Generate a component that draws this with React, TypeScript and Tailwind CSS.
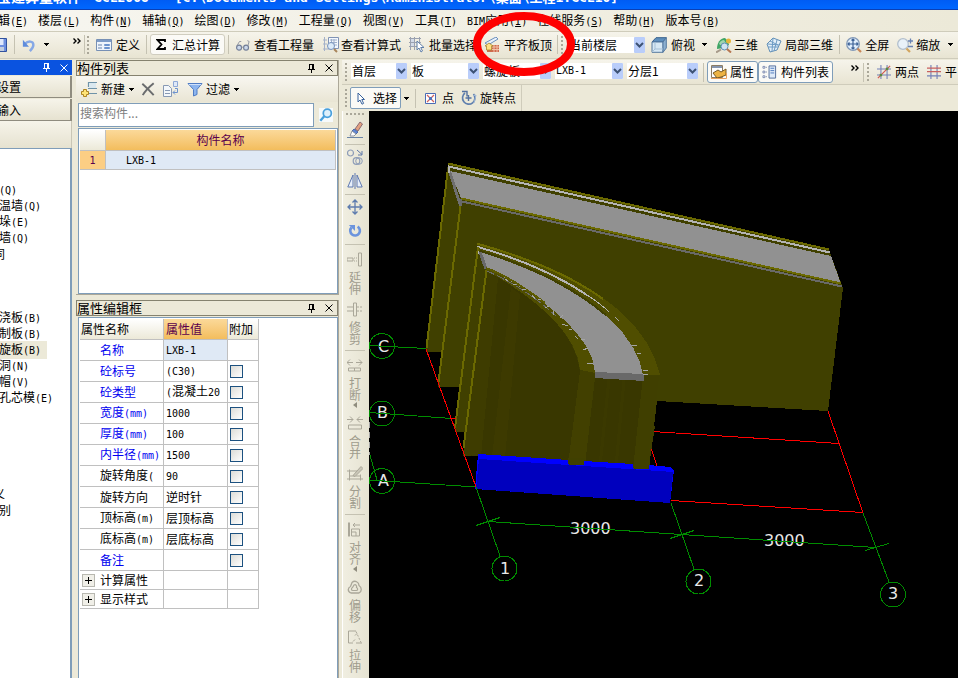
import React from "react";

/* Latin runs are set in a half-width face so that they take half a Chinese character each. */
function Mix({ children }: { children: string }) {
  return (
    <>
      {children.split(/([\x20-\x7e]+)/).map((part, i) =>
        i % 2 ? (
          <span key={i} className="font-['DejaVu_Sans_Mono','Noto_Sans_CJK_SC',monospace] text-[10px] whitespace-pre">
            {part}
          </span>
        ) : (
          part
        )
      )}
    </>
  );
}

function Icon({ children, className = "w-4 h-4", box = "0 0 16 16" }: { children: React.ReactNode; className?: string; box?: string }) {
  return (
    <svg viewBox={box} className={"shrink-0 " + className} fill="none" aria-hidden="true">
      {children}
    </svg>
  );
}

const Caret = ({ className = "" }: { className?: string }) => (
  <svg viewBox="0 0 6 3" className={"h-[3px] w-[6px] shrink-0 " + className} shapeRendering="crispEdges" aria-hidden="true">
    <path d="M0 0h6L3 3z" fill="#000" />
  </svg>
);
const Sep = ({ className = "" }: { className?: string }) => <span className={"h-[19px] w-px shrink-0 bg-[#c5c2b2] " + className} />;
const Grip = ({ className = "" }: { className?: string }) => (
  <span className={"flex shrink-0 flex-col gap-[2px] " + className}>
    {[0, 1, 2, 3, 4].map((i) => (
      <i key={i} className="block h-[2px] w-[2px] bg-[#aaa799]" />
    ))}
  </span>
);
const More = ({ className = "" }: { className?: string }) => (
  <button aria-label="更多" className={"shrink-0 " + className}>
    <Icon box="0 0 8 6" className="h-[6px] w-2">
      <path d="M0.5 0.5L3 3L0.5 5.5M4.5 0.5L7 3L4.5 5.5" stroke="#000" strokeWidth="1.4" />
    </Icon>
  </button>
);

function Tool({ icon, text, className = "" }: { icon: React.ReactNode; text: string; className?: string }) {
  return (
    <button className={"flex shrink-0 items-center whitespace-nowrap " + className}>
      {icon}
      <span>{text}</span>
    </button>
  );
}

function Combo({ value, label, className = "" }: { value: string; label: string; className?: string }) {
  return (
    <label className={"relative flex h-4 shrink-0 items-center bg-white " + className}>
      <span className="sr-only">{label}</span>
      <select defaultValue={value} className="h-4 w-full appearance-none bg-transparent pl-px leading-4 outline-none">
        <option>{value}</option>
      </select>
      <span className="pointer-events-none absolute top-0 right-0 flex h-4 w-[11px] items-center justify-center rounded-[1px] bg-[#b9cdfa]">
        <svg viewBox="0 0 9 6" className="h-[6px] w-[9px]" aria-hidden="true">
          <path d="M1 1L4.5 4.5L8 1" fill="none" stroke="#3d5274" strokeWidth="2" />
        </svg>
      </span>
    </label>
  );
}

/* ---------- icons ---------- */
const SaveIcon = (
  <Icon box="8 0 8 16" className="h-4 w-2">
    <path d="M1 1.500h13.500v13H1z" fill="#6d8fe0" stroke="#31529e" />
    <path d="M4 2h7.500v6H4z" fill="#dfe8fb" />
    <path d="M4 10h8v4H4z" fill="#c3cede" />
  </Icon>
);
const UndoIcon = (
  <Icon className="h-[14px] w-[14px]">
    <path d="M3 7C7 3 13 3 13 8c0 3-2 5-4 7" stroke="#86a8e6" strokeWidth="2.800" />
    <path d="M1 2v8h7z" fill="#5f8cdc" />
  </Icon>
);
const DefineIcon = (
  <Icon>
    <path d="M.5 2.500h15v11H.5z" fill="#eef4fc" stroke="#7790b5" />
    <path d="M1 3h14v2H1z" fill="#7e9cc8" />
    <path d="M2 8h4M2 11h4" stroke="#6681aa" />
    <path d="M8.500 7.500h5v1h-5zM8.500 10.500h5v1h-5z" stroke="#6c93cd" />
  </Icon>
);
const GlassesIcon = (
  <Icon className="h-4 w-[14px]">
    <circle cx="3.500" cy="11" r="2.800" fill="#cbd8ea" stroke="#707c96" strokeWidth="1.300" />
    <circle cx="11.500" cy="11" r="2.800" fill="#cbd8ea" stroke="#707c96" strokeWidth="1.300" />
    <path d="M6.300 10.500h2.400M1 9L4 4h2M13.500 9L15 4l-2-1" stroke="#8a8f9d" />
  </Icon>
);
const FormulaIcon = (
  <Icon>
    <path d="M5.500.5h10v11h-10z" fill="#f4f8fd" stroke="#8093b5" />
    <path d="M7 3h7M7 5.500h7M7 8h7M8.500 2v7M11 2v7" stroke="#9fb0cc" />
    <path d="M1.500 0v14M0 3h4M0 7h4M0 12h7" stroke="#a5b2c9" />
    <circle cx="8" cy="9" r="3.500" fill="#dcebf9" stroke="#7893bd" />
    <path d="M11 12l3 3" stroke="#a8855c" strokeWidth="2" />
  </Icon>
);
const BatchIcon = (
  <Icon>
    <path d="M0 1.500h12M0 5.500h12M0 9.500h8M1.500 0v13M5.500 0v13M10.500 0v6" stroke="#9aa1b0" />
    <path d="M2 2h3v3H2zM2 6h3v3H2z" fill="#d3dbe9" />
    <path d="M8 4v9l2-2 2 4 1.500-1-1.800-3.500H15z" fill="#fff" stroke="#5f7ea9" />
  </Icon>
);
const FlushIcon = (
  <Icon>
    <path d="M1 6L12 0l2 2L4 8z" fill="#e9f1fb" stroke="#6a8fbd" />
    <path d="M8 8h7v7H3v-3h5z" fill="#cf6a4e" />
    <path d="M8 10h7M8 12.500h7M10 8v7M13 8v7" stroke="#f1c1a7" />
    <path d="M1 9l4-3 4 3H7.500v4h-5V9z" fill="#ffe083" stroke="#a8872c" strokeWidth=".8" />
  </Icon>
);
const CubeIcon = (
  <Icon>
    <path d="M1 5l4-4.300h10.300L12 5z" fill="#5e8fbd" stroke="#365f8d" />
    <path d="M1 5h11v10.300H1z" fill="#d6e8f4" stroke="#54789e" />
    <path d="M12 5l3.300-4.300V11L12 15.300z" fill="#8cb0d0" stroke="#54789e" />
    <path d="M4 5v7h8M1 15l3-3" stroke="#a4bfd6" />
  </Icon>
);
const ThreeDIcon = (
  <Icon>
    <path d="M1 12C1 6 4 1 9 1l3 3 1 4-6 3z" fill="#3fa565" />
    <path d="M3 7c1-3 3-4 5-4l2 3-4 3z" fill="#9fd4ae" />
    <circle cx="12.500" cy="4" r="2.500" fill="#e6b53c" />
    <circle cx="8.500" cy="9.500" r="3.500" fill="#cfe3f2" stroke="#5d8fb6" />
    <path d="M11 12l4 3.500" stroke="#b67650" strokeWidth="2" />
    <path d="M0 15.500l5-3" stroke="#a79a8a" strokeWidth="2" />
  </Icon>
);
const LocalIcon = (
  <Icon>
    <path d="M1 7l6-6 8 3-4 9-7 2z" fill="#e3eff8" stroke="#628fb6" />
    <path d="M4 4l8 4M2 10h10M7 1L6 14M11 3L8 14M2 7l11 1" stroke="#6d9bc4" />
  </Icon>
);
const FullIcon = (
  <Icon>
    <circle cx="7" cy="7" r="6.300" fill="#e1eefb" stroke="#8399b7" strokeWidth="1.300" />
    <path d="M7 2v10M2 7h10M5.500 3.500L7 2l1.500 1.500M5.500 10.500L7 12l1.500-1.500M3.500 5.500L2 7l1.500 1.500M10.500 5.500L12 7l-1.500 1.500" stroke="#3e6297" strokeWidth="1.200" />
    <path d="M11.500 11.500l3.500 3.500" stroke="#c98859" strokeWidth="2.200" />
  </Icon>
);
const ZoomIcon = (
  <Icon>
    <circle cx="6" cy="7" r="5.300" fill="#e9f1f9" stroke="#b2bfcd" strokeWidth="1.300" />
    <path d="M9.500 11.500L13 15" stroke="#d2a55e" strokeWidth="2.200" />
    <path d="M11 4h5M13.500 1.500v5M11 9.500h5" stroke="#6982b4" strokeWidth="1.300" />
  </Icon>
);
const PropIcon = (
  <Icon>
    <path d="M.5 1.500h11v12H.5z" fill="#fff" stroke="#8b7c64" />
    <path d="M1 2h10v2H1z" fill="#8695ae" />
    <path d="M2 9l5-3 3 2 5-3v6l-5 2-4 1z" fill="#edb343" stroke="#795b23" />
    <path d="M0 14.500h15.500V9" stroke="#e9a15d" />
  </Icon>
);
const ListIcon = (
  <Icon className="h-4 w-[15px]">
    <path d="M7.500 1.500h7v13h-7z" fill="#dfeaf8" stroke="#516c9b" />
    <path d="M9 4h4M9 6.500h4M9 9h4" stroke="#4d79bd" />
    <path d="M1 2h2v2H1zM1 7h2v2H1zM1 12h2v2H1z" fill="#fff" stroke="#6173a2" strokeWidth=".8" />
    <path d="M4 3h2M4 8h2M4 13h2" stroke="#54648e" strokeDasharray="1 1" />
  </Icon>
);
const TwoPointIcon = (
  <Icon className="h-[14px] w-[14px]">
    <path d="M0 4.500h16M0 11.500h16M4.500 0v16M11.500 0v16" stroke="#7380b7" strokeWidth="1.200" />
    <path d="M1 15L15 1" stroke="#d05a52" strokeWidth="1.400" />
    <circle cx="4.500" cy="11.500" r="1.600" fill="#5b8a3c" />
    <circle cx="11.500" cy="4.500" r="1.600" fill="#5b8a3c" />
  </Icon>
);
const ParallelIcon = (
  <Icon className="h-[14px] w-[14px]">
    <path d="M4.500 0v16M11.500 0v16M0 12.500h16" stroke="#7380b7" strokeWidth="1.300" />
    <path d="M0 3.500h16M0 7.500h16" stroke="#c8605f" strokeWidth="1.300" />
  </Icon>
);
const PointerIcon = (
  <Icon className="h-[13px] w-2" box="0 0 8 13">
    <path d="M1 1v9l2-2 2 4.200 1.600-.8L4.800 7.500h2.700z" fill="#fff" stroke="#38629c" />
  </Icon>
);
const PointIcon = (
  <Icon className="h-[11px] w-[11px]" box="0 0 11 11">
    <path d="M.5.5h10v10H.5z" fill="#fff" stroke="#4a6cb5" />
    <path d="M2 2l7 7M9 2L2 9" stroke="#d0605c" strokeWidth="1.200" />
    <path d="M4 4h3v3H4z" fill="#5173b8" />
  </Icon>
);
const RotPointIcon = (
  <Icon>
    <path d="M4 3a6.200 6.200 0 1 0 8.500 1" stroke="#5f7fae" strokeWidth="1.700" />
    <path d="M1 1.500h5v5M7.500 5v6M4.500 8h6" stroke="#5371a0" strokeWidth="1.400" />
    <path d="M12 6l3-1-2 8" stroke="#9db6d6" />
  </Icon>
);
const NewIcon = (
  <Icon>
    <path d="M7 1.500h9M7 7.500h9M8 12.500h8M7.500 1v5" stroke="#6f93a8" strokeWidth="1.200" />
    <path d="M8 2h7v5H8z" fill="#dae8ef" />
    <path d="M2.500 8.500h3v2h2v3h-2v2h-3v-2h-2v-3h2z" fill="#ffe477" stroke="#ad8523" />
  </Icon>
);
const DeleteIcon = (
  <Icon className="h-[14px] w-[14px]">
    <path d="M1.500 2C6 6 10 10 14.500 15M14.500 1.500C9 6 5 10 2 15" stroke="#6a6c6e" strokeWidth="2.200" />
  </Icon>
);
const CopyDocIcon = (
  <Icon>
    <path d="M.5 4.500h5l3 3v8h-8z" fill="#f3f7fb" stroke="#8799b4" />
    <path d="M2 9.500h5M2 12.500h5" stroke="#8799b4" />
    <path d="M12 7.500h2.500v4H10M12 9.500l-2 2 2 2" stroke="#6d93ce" />
    <path d="M10.500.5h4v5h-4z" fill="#dfe9f8" stroke="#8fa9d6" />
  </Icon>
);
const FunnelIcon = (
  <Icon>
    <path d="M1 2.500h14L10 8.500v5L6.500 15V8.500z" fill="#8db5ee" stroke="#4f7cc4" />
    <path d="M2 3.500h12" stroke="#cfe1fa" />
  </Icon>
);
const PinIcon = ({ color }: { color: string }) => (
  <Icon box="0 0 7 9" className="h-[9px] w-[7px]">
    <path d="M1.500 5V.5h4V5M0 5.500h7M3.500 5.500V9M4.600 1v4" stroke={color} strokeWidth="1.100" shapeRendering="crispEdges" />
  </Icon>
);
const CloseIcon = ({ color }: { color: string }) => (
  <Icon box="0 0 8 8" className="h-2 w-2">
    <path d="M.5.5l7 7M7.500.5l-7 7" stroke={color} />
  </Icon>
);

/* ---------- data ---------- */
const menus: [string, string][] = [
  ["辑", "E"], ["楼层", "L"], ["构件", "N"], ["辅轴", "Q"], ["绘图", "D"], ["修改", "M"], ["工程量", "Q"],
  ["视图", "V"], ["工具", "T"], ["BIM应用", "I"], ["在线服务", "S"], ["帮助", "H"], ["版本号", "B"],
];

const tree: (string | null)[] = [
  "(Q)", "温墙(Q)", "垛(E)", "墙(Q)", "同", null, null, null, "浇板(B)", "制板(B)", "旋板(B)", "洞(N)", "帽(V)",
  "孔芯模(E)", null, null, null, null, null, "义", "别",
];

const props: [string, string, boolean, boolean][] = [
  ["名称", "LXB-1", true, false],
  ["砼标号", "(C30)", true, true],
  ["砼类型", "(混凝土20", true, true],
  ["宽度(mm)", "1000", true, true],
  ["厚度(mm)", "100", true, true],
  ["内半径(mm)", "1500", true, true],
  ["旋转角度(", "90", false, true],
  ["旋转方向", "逆时针", false, true],
  ["顶标高(m)", "层顶标高", false, true],
  ["底标高(m)", "层底标高", false, true],
  ["备注", "", true, true],
];

/* ---------- side panels ---------- */
function PanelTitle({ text }: { text: string }) {
  return (
    <header className="flex h-4 shrink-0 items-center border border-[#85826f] bg-[#ece9d8] pr-1 text-[13px]">
      <h2 className="grow leading-[14px]">{text}</h2>
      <button aria-label="固定" className="mr-[10px]"><PinIcon color="#000" /></button>
      <button aria-label="关闭"><CloseIcon color="#000" /></button>
    </header>
  );
}

function ModulePanel() {
  return (
    <aside className="flex w-[72px] shrink-0 flex-col overflow-hidden">
      <header className="flex h-[15px] shrink-0 items-center justify-end bg-[#0a53e0] pr-1">
        <button aria-label="固定" className="mr-[10px]"><PinIcon color="#fff" /></button>
        <button aria-label="关闭"><CloseIcon color="#fff" /></button>
      </header>
      {["设置", "输入"].map((t) => (
        <button key={t} className="mt-px flex h-[22px] shrink-0 items-center border-r-2 border-b border-[#8f8c7f] bg-linear-to-b from-[#f6f4ea] to-[#e6e2d0]">
          <span className="-ml-[3px] whitespace-nowrap">{t}</span>
        </button>
      ))}
      <div className="h-[27px] shrink-0 border-r border-[#c9c6b6] bg-linear-to-b from-[#f6f4ea] to-[#e6e2d0]" />
      <ul className="grow overflow-hidden border-t border-r-2 border-[#7f9db9] bg-white pt-[33px]">
        {tree.map((t, i) => (
          <li key={i} className="flex h-4 items-center">
            {t && (
              <span className={"-ml-px whitespace-nowrap " + (t === "旋板(B)" ? "bg-[#ece9d8] pr-[6px]" : "") + (t.length === 1 && t !== "别" ? " -translate-x-[6px]" : "")}>
                <Mix>{t}</Mix>
              </span>
            )}
          </li>
        ))}
      </ul>
    </aside>
  );
}

function ComponentPanel() {
  return (
    <section className="flex h-[235px] shrink-0 flex-col border-r border-b border-[#aca899]">
      <PanelTitle text="构件列表" />
      <div className="flex h-[26px] shrink-0 items-center bg-linear-to-b from-[#f8f7f1] to-[#e9e5d4] pl-[5px]">
        <Tool icon={NewIcon} text="新建" className="gap-1" />
        <Caret className="ml-[3px]" />
        <button aria-label="删除" className="ml-[7px]">{DeleteIcon}</button>
        <button aria-label="复制" className="ml-2">{CopyDocIcon}</button>
        <Tool icon={FunnelIcon} text="过滤" className="ml-2 gap-[3px]" />
        <Caret className="ml-[3px]" />
      </div>
      <div className="flex h-[26px] shrink-0 items-start pt-px pl-[2px]">
        <input aria-label="搜索构件" placeholder="搜索构件..." className="h-6 min-w-0 grow border border-[#7f9db9] bg-white px-px pb-[5px] text-[12px] outline-none placeholder:text-[#808080]" />
        <button aria-label="搜索" className="flex h-6 w-[24px] items-center justify-center">
          <Icon className="h-[14px] w-[14px]">
            <rect width="16" height="16" fill="#f6fafc" />
            <circle cx="9.500" cy="6" r="4.600" fill="#dff0fb" stroke="#4aa0dc" strokeWidth="2" />
            <path d="M6 9.500L1.500 14.500" stroke="#4aa0dc" strokeWidth="2.600" />
          </Icon>
        </button>
      </div>
      <div className="ml-[2px] grow border border-[#7f9db9] bg-white p-px">
        <table className="w-full table-fixed border-separate border-spacing-0">
          <colgroup><col className="w-[26px]" /><col /></colgroup>
          <thead>
            <tr className="h-[21px]">
              <th className="border-r border-b border-[#c0c0c0] bg-linear-to-b from-white to-[#ece9d8] p-0" />
              <th className="border-r border-b border-[#c0c0c0] bg-linear-to-b from-[#fbd999] to-[#f3bd5c] p-0 font-normal text-[#59004d]">构件名称</th>
            </tr>
          </thead>
          <tbody>
            <tr className="h-[19px]">
              <td className="border-r border-b border-[#c0c0c0] bg-[#fcce84] p-0 text-center text-[#59004d]"><Mix>1</Mix></td>
              <td className="border-r border-b border-[#c0c0c0] bg-[#dfe9f5] p-0 pl-5"><Mix>LXB-1</Mix></td>
            </tr>
          </tbody>
        </table>
      </div>
    </section>
  );
}

const cell = "border-r border-b border-[#c0c0c0] p-0 overflow-hidden whitespace-nowrap ";

function PropertyPanel() {
  return (
    <section className="mt-[5px] flex min-h-0 grow flex-col border-r border-[#aca899]">
      <PanelTitle text="属性编辑框" />
      <div className="mt-px ml-[2px] min-h-0 grow overflow-hidden border border-b-0 border-[#7f9db9] bg-white p-px">
        <table className="w-[179px] table-fixed border-separate border-spacing-0 leading-4">
          <colgroup><col className="w-[84px]" /><col className="w-16" /><col className="w-[31px]" /></colgroup>
          <thead>
            <tr className="h-[21px] text-left">
              <th className={cell + "bg-linear-to-b from-white to-[#ece9d8] pl-px font-normal"}>属性名称</th>
              <th className={cell + "bg-linear-to-b from-[#fbd999] to-[#f3bd5c] pl-[2px] font-normal text-[#59004d]"}>属性值</th>
              <th className={cell + "bg-linear-to-b from-white to-[#ece9d8] pl-px font-normal"}>附加</th>
            </tr>
          </thead>
          <tbody>
            {props.map(([name, value, blue, box], i) => (
              <tr key={name} className="h-[21px]">
                <td className={cell + "pl-5 " + (blue ? "text-[#0000f0]" : "")}><Mix>{name}</Mix></td>
                <td className={cell + "pl-[2px] " + (i === 0 ? "bg-[#dfe9f5]" : "")}><Mix>{value}</Mix></td>
                <td className={cell + "pl-[2px]"}>
                  {box && (
                    <input type="checkbox" aria-label={"附加 " + name} className="block h-[13px] w-[13px] appearance-none border border-[#1c5180] bg-linear-to-br from-[#dcdcd7] to-white" />
                  )}
                </td>
              </tr>
            ))}
            {["计算属性", "显示样式"].map((t) => (
              <tr key={t} className="h-[19px]">
                <td className={cell + "pl-[2px]"}>
                  <span className="flex items-center gap-[5px]">
                    <button aria-label={"展开 " + t} className="flex h-[13px] w-[13px] items-center justify-center border border-[#b8b8b0] bg-[#f0efe8]">
                      <Icon box="0 0 7 7" className="h-[7px] w-[7px]"><path d="M3.500 0v7M0 3.500h7" stroke="#000" /></Icon>
                    </button>
                    {t}
                  </span>
                </td>
                <td className={cell} />
                <td className={cell} />
              </tr>
            ))}
          </tbody>
        </table>
      </div>
    </section>
  );
}

/* ---------- vertical edit toolbar ---------- */
const g = "#aaa799";
const editTools: { text: string; icon: React.ReactNode; menu?: boolean; sep?: boolean }[] = [
  { text: "延伸", icon: <><path d="M0 5.500h6v3H0zM11.500.5h3v13h-3z" stroke={g} /><path d="M7 5.500h4M7 8.500h4" stroke={g} strokeDasharray="1 1" /></> },
  { text: "修剪", sep: true, icon: <><path d="M0 4.500h6M0 8.500h6M6.500.5h3v13h-3z" stroke={g} /><path d="M10 4.500h6M10 8.500h6" stroke={g} strokeDasharray="2 1" /></> },
  { text: "打断", menu: true, icon: <><path d="M0 4h6M3 1L0 4l3 3M9 4h6M12 1l3 3-3 3" stroke={g} /><path d="M1.500 9.500h6v3h-6zM7.500 9.500h6v3h-6z" stroke={g} /></> },
  { text: "合并", icon: <><path d="M0 3h6M3 0l3 3-3 3M16 3h-6M13 0l-3 3 3 3M1.500 8.500h13v4h-13z" stroke={g} /></> },
  { text: "分割", sep: true, icon: <><path d="M0 4.500h11M0 12.500h16M2.500 3v11M13.500 8v6M2 9.500h12" stroke={g} /><path d="M6 9L14 0l2 2L8 10z" fill="#c9c6b8" stroke={g} /></> },
  { text: "对齐", menu: true, icon: <><path d="M2 0v14" stroke={g} strokeWidth="2" /><path d="M4.500 6.500h8v7h-8zM4 9.500h5v4M6 2.500h7M8 .5l-2 2 2 2" stroke={g} /></> },
  { text: "偏移", icon: <><path d="M5 2C8-1 12 2 12 5c3 2 3 6 0 7.500H4C0 11 1 7 3.500 6z" stroke={g} strokeWidth="1.300" /><path d="M7 4.500c2-1 3 1 2.500 2.500 2 1 1 3 0 3H6c-2 0-2-2-.5-3z" stroke={g} strokeWidth="1.200" /></> },
  { text: "拉伸", icon: <><path d="M9 .5H1.500v12H6M9 12.500h6" stroke={g} /><path d="M9 1l5 11" stroke={g} strokeDasharray="2 1.500" /><path d="M6 11l2-2M8 5l2-2" stroke={g} /></> },
];

const HSep = () => <i className="mt-px block h-px w-5 shrink-0 bg-[#c5c2b2]" />;

function EditBar() {
  const iconBtn = "flex h-6 shrink-0 items-center";
  return (
    <div className="flex w-[27px] shrink-0 flex-col items-center overflow-hidden border-l border-white bg-linear-to-r from-[#f0eee1] to-[#e6e3d2] pr-[2px]">
      <span className="flex h-[6px] shrink-0 items-center gap-[2px]">
        {[0, 1, 2, 3, 4].map((i) => <i key={i} className="block h-[2px] w-[2px] bg-[#aaa799]" />)}
      </span>
      <button aria-label="删除图元" className="flex h-[26px] shrink-0 items-center">
        <Icon className="h-[18px] w-4" box="0 0 16 18">
          <path d="M0 16.500h16" stroke="#6a84a6" />
          <path d="M8 8l5-7 2.500 2L11 10z" fill="#e3a07f" stroke="#8a6a72" />
          <path d="M7 8l4 3-2 2-4-3z" fill="#5f86d6" stroke="#4c68a5" />
          <path d="M5 10l4 3-2 2H3z" fill="#fff" stroke="#8e95a3" />
        </Icon>
      </button>
      <HSep />
      <button aria-label="复制图元" className={iconBtn}>
        <Icon><circle cx="3.500" cy="4" r="3" stroke="#8e9db8" strokeWidth="1.200" /><circle cx="9.500" cy="12" r="3.300" stroke="#8e9db8" strokeWidth="1.200" /><circle cx="12" cy="12" r="3.300" stroke="#8e9db8" /><path d="M10 1l5 4.500M15 2v4h-4" stroke="#5f79a9" /></Icon>
      </button>
      <button aria-label="镜像" className={iconBtn}>
        <Icon><path d="M6 2v12H.8zM10 2v12h5.200z" fill="#e8effa" stroke="#5f79b0" /><path d="M8 0v16" stroke="#5f79b0" /></Icon>
      </button>
      <HSep />
      <button aria-label="移动" className={iconBtn}>
        <Icon><path d="M8 1v14M1 8h14M5.500 3.500L8 1l2.500 2.500M5.500 12.500L8 15l2.500-2.500M3.500 5.500L1 8l2.500 2.500M12.500 5.500L15 8l-2.500 2.500" stroke="#5d7bae" strokeWidth="1.300" /></Icon>
      </button>
      <button aria-label="旋转" className={iconBtn}>
        <Icon className="h-[14px] w-[14px]"><path d="M4 4a5.500 5.500 0 1 0 7-1" stroke="#6c94dd" strokeWidth="3" /><path d="M1 1h7v7z" fill="#6c94dd" /></Icon>
      </button>
      <HSep />
      {editTools.map((t) => (
        <React.Fragment key={t.text}>
          <button className="flex shrink-0 flex-col items-center pt-[7px] text-[#9f9c8d]">
            <Icon box="0 0 16 14" className="h-[15px] w-4">{t.icon}</Icon>
            <span className="mt-1 flex flex-col leading-3">
              <span>{t.text[0]}</span>
              <span>{t.text[1]}</span>
            </span>
            {t.menu && <svg viewBox="0 0 4 6" className="mt-px mb-px h-[6px] w-1" aria-hidden="true"><path d="M4 0v6L0 3z" fill="#8f8c7e" /></svg>}
          </button>
          {t.sep && <span className="flex h-[6px] shrink-0 items-end"><HSep /></span>}
        </React.Fragment>
      ))}
    </div>
  );
}

/* ---------- 3D model view ---------- */
function Viewport() {
  const label = "fill-[#e8e8e8] font-['DejaVu_Sans',sans-serif] text-[16px]";
  return (
    <svg viewBox="369 111 589 567" preserveAspectRatio="xMinYMin slice" className="h-full min-w-0 grow bg-black" shapeRendering="crispEdges" role="img" aria-label="三维视图">
      {/* back slab */}
      <path d="M448 163L829 250L843 288L828 411L657 401L649 469H634L600 466H568L478 456H463L465 432H455L459 387H438L441 352H426Z" fill="#404000" />
      <path d="M450 171L831 256L841 284L461 198Z" fill="#919191" />
      <path d="M448 171L451 171L462 206L459 206Z" fill="#6f6f6f" />
      <g strokeWidth="2" fill="none">
        <path d="M448 163.500L829 249.500" stroke="#6b6900" />
        <path d="M448.500 173V166.500L830 252.500" stroke="#b4b4b4" />
        <path d="M451 169.500L831 255" stroke="#404000" />
        <path d="M461 198.500L841 283.500" stroke="#6b6900" />
        <path d="M462 201.500L842 286.500" stroke="#696969" />
        <path d="M461 199V206" stroke="#696969" />
      </g>
      {/* curved wall */}
      <path d="M486 272C520 286 575 325 580 371L568 465L478 456L463 455Z" fill="#393700" />
      <path d="M486 272L498 278L481 456L463 455Z" fill="#3e3c00" />
      <path d="M520 294L505 458L492 457L511 288Z" fill="#3d3a00" />
      <path d="M580 371H595L585 465H568Z" fill="#424000" />
      <path d="M595 378L643 381L634 468L585 465Z" fill="#393700" />
      <path d="M609 379L600 466M624 380L616 467" stroke="#3b3900" strokeWidth="3" />
      <path d="M643 376H659L649 469H633Z" fill="#403f00" />
      <path d="M477 243C540 262 591 285 622 313C642 332 655 352 660 375H643L595 373L580 370C577 330 528 294 486 270Z" fill="#504e00" />
      <path d="M480 252C520 264 577 288 609 318C629 337 641 357 643 375L595 372C592 330 530 290 485 267Z" fill="#919191" />
      <path d="M595 372L644 374V381L595 378Z" fill="#696969" />
      <g fill="none" strokeWidth="2">
        <path d="M477 243.500C530 259 570 275 603 299" stroke="#6b6900" />
        <path d="M478 254V247C524 260 560 277 587 295" stroke="#b4b4b4" />
        <path d="M587 295C595 300 603 306 609 312" stroke="#b4b4b4" strokeWidth="1" />
        <path d="M480 251C524 264 570 285 606 315" stroke="#404000" />
        <path d="M480 252L486 269" stroke="#696969" strokeWidth="3" />
        <path d="M486 268C500 273 520 284 545 303" stroke="#5c5a00" />
        <path d="M487 271C505 279 530 292 556 316" stroke="#696969" strokeWidth="1" strokeDasharray="8 3" />
        <path d="M447.500 172L426.500 348M460.500 206L438.500 382M478 247L455 428M486.500 270L463.500 448" stroke="#6b6900" />
      </g>
      <path d="M505 279l3 2M513 284l3 1M522 290l4-1M532 295l3 4M538 300l3-1M545 308l4-2M553 311l1 4M560 318l3-3M562 324l6 2M569 330l3-1M575 336l3 3M581 340l4-1M583 350l5-2M587 364l6-1M632 346l5-1M637 353h4M643 370h5M643 374h5M615 317l4 4" stroke="#a5a5a5" strokeWidth="1" />

      {/* highlighted slab */}
      <path d="M478 454L568 460V464L584 465V461L633 464V468L649 469V465L670 467L674 470L670 503L475 489Z" fill="#0000ff" />
      <path d="M479 459L673 472L670 503L476 489Z" fill="#0000be" />
      <path d="M568 458H585L584 465H569ZM634 460H650L649 469H634Z" fill="#404000" />

      {/* labels */}
      <g className={label} shapeRendering="auto">
        <text x="378" y="352">C</text>
        <text x="377" y="418">B</text>
        <text x="378" y="486">A</text>
        <text x="500" y="574">1</text>
        <text x="694" y="586">2</text>
        <text x="888" y="599">3</text>
        <text x="570" y="534">3000</text>
        <text x="764" y="546">3000</text>
      </g>
      <path d="M369.500 422V455" stroke="#a5a5a5" strokeDasharray="6 4" />

      {/* axis grid */}
      <g fill="none" stroke="#008c00">
        <circle cx="382" cy="346" r="12.500" />
        <circle cx="382" cy="413.500" r="12.500" />
        <circle cx="382" cy="481" r="12.500" />
        <circle cx="504.500" cy="568.500" r="12.500" />
        <circle cx="698.500" cy="581.500" r="12.500" />
        <circle cx="893" cy="594.500" r="12.500" />
        <path d="M369 345.500L426 348.500M369 412.500L452 418.500M369 480L476 487M370 455L377 480" />
        <path d="M476 487L500 556M671 503L694 569M863 513L889 582" />
        <path d="M488 521.500L875 547.500M476 525.500L500 517.500M670 538.500L694 530.500M865 550.500L889 543.500" />
      </g>
      <path d="M426 349L476 487M450 418.500H456M652 431.500L839 443.500M671 500.500L863 512.500M828 411L863 513M651 448L657 466" stroke="#ff0000" fill="none" />
      <path d="M651 426L655 426L651 452H649Z" fill="#404000" />
    </svg>
  );
}

export default function App() {
  return (
    <div className="relative flex h-screen flex-col overflow-hidden bg-[#ece9d8] font-['Noto_Sans_CJK_SC',sans-serif] text-[12px] leading-4 text-black">
      <header className="flex h-[10px] shrink-0 items-end overflow-hidden border-b border-[#0b3fb5] bg-linear-to-b from-[#005cf4] to-[#0067ff] pb-[3px] text-[14px] font-bold text-white">
        <h1 className="-ml-[3px] flex items-baseline leading-4 whitespace-pre">
          <span>宝建算量软件</span>
          <span className="ml-[13px] font-['DejaVu_Sans_Mono','Noto_Sans_CJK_SC',monospace] text-[13px]">GCL2008</span>
          <span className="ml-[26px] font-['DejaVu_Sans_Mono','Noto_Sans_CJK_SC',monospace] text-[13px]">[C:\Documents and Settings\Administrator\桌面\工程1.GCL10]</span>
        </h1>
      </header>

      <nav className="flex h-[22px] shrink-0 items-center gap-[10px] overflow-hidden border-b border-[#cfccbb] bg-linear-to-r from-[#f7f6f0] to-[#ece9d8]">
        {menus.map(([name, key], i) => (
          <button key={name} className={"shrink-0 whitespace-nowrap " + (i === 0 ? "-ml-[2px]" : "")}>
            <Mix>{name}</Mix>
            <span className="font-['DejaVu_Sans_Mono',monospace] text-[10px]">(<u>{key}</u>)</span>
          </button>
        ))}
      </nav>

      <div className="flex h-[27px] shrink-0 items-center overflow-hidden border-b border-[#cfccbb] bg-linear-to-b from-[#f6f4eb] to-[#e8e4d2] pb-px">
        <button aria-label="保存">{SaveIcon}</button>
        <Sep className="ml-[6px]" />
        <button aria-label="撤销" className="ml-[7px]">{UndoIcon}</button>
        <Caret className="ml-[7px]" />
        <More className="mr-[3px] mb-2 ml-6" />
        <Sep />
        <Grip className="ml-[2px]" />
        <Tool icon={DefineIcon} text="定义" className="ml-[7px] gap-1" />
        <Sep className="ml-[6px]" />
        <button className="ml-[3px] flex h-[21px] w-[75px] shrink-0 items-center gap-[6px] rounded-[3px] border border-[#d0cdbf] bg-[#fbfaf6] pl-[5px] whitespace-nowrap">
          <Icon box="0 0 10 11" className="h-[11px] w-[10px]"><path d="M9 3V1H1.500L5.500 5.500L1.500 10H9V8" stroke="#000" strokeWidth="1.800" /></Icon>
          汇总计算
        </button>
        <Sep className="ml-[3px]" />
        <Tool icon={GlassesIcon} text="查看工程量" className="ml-[7px] gap-1" />
        <Tool icon={FormulaIcon} text="查看计算式" className="ml-[9px] gap-[2px]" />
        <Tool icon={BatchIcon} text="批量选择" className="ml-2 gap-1" />
        <Tool icon={FlushIcon} text="平齐板顶" className="ml-[7px] gap-1" />
        <Sep className="ml-[5px]" />
        <Grip className="ml-[3px]" />
        <Combo value="当前楼层" label="楼层范围" className="ml-[5px] w-[77px]" />
        <Tool icon={CubeIcon} text="俯视" className="ml-[6px] gap-1" />
        <Caret className="ml-[6px]" />
        <Tool icon={ThreeDIcon} text="三维" className="ml-[9px] gap-[2px]" />
        <Tool icon={LocalIcon} text="局部三维" className="ml-2 gap-[3px]" />
        <Sep className="ml-[6px]" />
        <Tool icon={FullIcon} text="全屏" className="ml-[6px] gap-[3px]" />
        <Tool icon={ZoomIcon} text="缩放" className="ml-2 gap-[3px]" />
        <Caret className="ml-[7px]" />
      </div>

      <div className="flex min-h-0 grow pt-px">
        <ModulePanel />
        <div className="ml-1 flex w-[263px] shrink-0 flex-col">
          <ComponentPanel />
          <PropertyPanel />
        </div>
        <main className="ml-[3px] flex min-w-0 grow flex-col">
          <div className="flex h-[25px] shrink-0 items-center overflow-hidden border-b border-[#cfccbb] bg-linear-to-b from-[#f6f4eb] to-[#e8e4d2]">
            <Grip className="ml-[3px]" />
            <Combo value="首层" label="楼层" className="mb-[2px] ml-[4px] w-[56px]" />
            <Combo value="板" label="构件类别" className="mb-[2px] ml-[4px] w-[68px]" />
            <Combo value="螺旋板" label="构件类型" className="mb-[2px] ml-[4px] w-[68px]" />
            <Combo value="LXB-1" label="构件" className="mb-[2px] ml-[4px] w-[68px] font-['DejaVu_Sans_Mono',monospace] text-[10px]" />
            <Combo value="分层1" label="分层" className="mb-[2px] ml-[4px] w-[71px]" />
            <Sep className="ml-[5px]" />
            <Tool icon={PropIcon} text="属性" className="ml-[3px] h-[22px] w-[51px] gap-[3px] rounded-[3px] border border-[#7f9db9] bg-[#fbfaf6] pl-[3px]" />
            <Tool icon={ListIcon} text="构件列表" className="h-[22px] w-[75px] gap-1 rounded-[3px] border border-[#7f9db9] bg-[#fbfaf6] pl-[3px]" />
            <More className="mr-1 mb-2 ml-[18px]" />
            <Sep />
            <Grip className="ml-[3px]" />
            <Tool icon={TwoPointIcon} text="两点" className="ml-2 gap-1" />
            <Tool icon={ParallelIcon} text="平" className="ml-2 gap-1" />
          </div>
          <div className="flex h-[26px] shrink-0 items-center overflow-hidden">
            <Grip className="ml-[3px]" />
            <Tool icon={PointerIcon} text="选择" className="ml-[3px] h-[22px] w-[51px] gap-2 rounded-[2px] border border-[#7f9db9] bg-[#fbfaf6] pl-[6px]" />
            <Caret className="ml-[2px]" />
            <Sep className="ml-[6px]" />
            <Tool icon={PointIcon} text="点" className="ml-[9px] gap-[6px]" />
            <Tool icon={RotPointIcon} text="旋转点" className="ml-[7px] gap-[3px]" />
            <i className="ml-[5px] h-full w-px bg-[#cfccbb]" />
          </div>
          <div className="flex min-h-0 grow">
            <EditBar />
            <Viewport />
          </div>
        </main>
      </div>

      {/* annotation ring laid over the toolbar */}
      <svg viewBox="0 0 104 66" className="pointer-events-none absolute top-[11px] left-[472px] h-[66px] w-[104px]" aria-hidden="true">
        <ellipse cx="52" cy="33" rx="47" ry="28" fill="none" stroke="#fe0000" strokeWidth="8" />
      </svg>
    </div>
  );
}
